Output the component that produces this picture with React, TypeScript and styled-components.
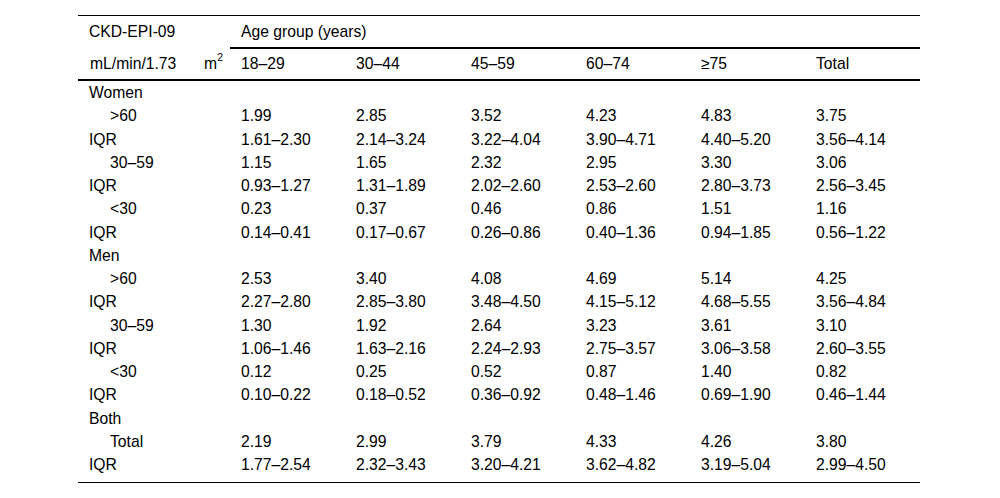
import React from "react";
import styled, { createGlobalStyle } from "styled-components";

const GlobalStyle = createGlobalStyle`
  html, body {
    margin: 0;
    padding: 0;
    background: #ffffff;
  }
  body {
    font-family: "Liberation Sans", Arial, sans-serif;
    color: #000000;
  }
`;

const Page = styled.div`
  padding: 15px 0 0 78px;
`;

const Table = styled.table`
  width: 842px;
  border-collapse: collapse;
  table-layout: fixed;
  font-size: 15.7px;
  border-top: 1px solid #000;
  border-bottom: 1px solid #000;
`;

const Col = styled.col<{ $w: number }>`
  width: ${(p) => p.$w}px;
`;

const HeadCell = styled.th<{ $rule?: boolean; $h: number }>`
  text-align: left;
  font-weight: normal;
  padding: 0 0 0 11px;
  height: ${(p) => p.$h}px;
  vertical-align: middle;
  border-bottom: ${(p) => (p.$rule ? "2px solid #000" : "none")};
`;

const UnitCell = styled(HeadCell)`
  padding: 0 7px 0 12px;
`;

const UnitInner = styled.div`
  display: flex;
  justify-content: space-between;
  align-items: baseline;
`;

const Sup = styled.sup`
  font-size: 10.5px;
  line-height: 0;
  position: relative;
  top: -1px;
`;

const Row = styled.tr<{ $last?: boolean }>`
  & > td {
    height: 23.25px;
    line-height: 23.25px;
    padding: ${(p) => (p.$last ? "0 0 6px 11px" : "0 0 0 11px")};
    vertical-align: top;
    white-space: nowrap;
  }
`;

const LabelCell = styled.td<{ $indent?: boolean }>`
  && {
    padding-left: ${(p) => (p.$indent ? "32px" : "11px")};
  }
`;

const Cell = styled.td``;

type Line =
  | { kind: "group"; label: string }
  | { kind: "data"; label: string; indent: boolean; values: string[] };

const lines: Line[] = [
  { kind: "group", label: "Women" },
  { kind: "data", label: ">60", indent: true, values: ["1.99", "2.85", "3.52", "4.23", "4.83", "3.75"] },
  { kind: "data", label: "IQR", indent: false, values: ["1.61–2.30", "2.14–3.24", "3.22–4.04", "3.90–4.71", "4.40–5.20", "3.56–4.14"] },
  { kind: "data", label: "30–59", indent: true, values: ["1.15", "1.65", "2.32", "2.95", "3.30", "3.06"] },
  { kind: "data", label: "IQR", indent: false, values: ["0.93–1.27", "1.31–1.89", "2.02–2.60", "2.53–2.60", "2.80–3.73", "2.56–3.45"] },
  { kind: "data", label: "<30", indent: true, values: ["0.23", "0.37", "0.46", "0.86", "1.51", "1.16"] },
  { kind: "data", label: "IQR", indent: false, values: ["0.14–0.41", "0.17–0.67", "0.26–0.86", "0.40–1.36", "0.94–1.85", "0.56–1.22"] },
  { kind: "group", label: "Men" },
  { kind: "data", label: ">60", indent: true, values: ["2.53", "3.40", "4.08", "4.69", "5.14", "4.25"] },
  { kind: "data", label: "IQR", indent: false, values: ["2.27–2.80", "2.85–3.80", "3.48–4.50", "4.15–5.12", "4.68–5.55", "3.56–4.84"] },
  { kind: "data", label: "30–59", indent: true, values: ["1.30", "1.92", "2.64", "3.23", "3.61", "3.10"] },
  { kind: "data", label: "IQR", indent: false, values: ["1.06–1.46", "1.63–2.16", "2.24–2.93", "2.75–3.57", "3.06–3.58", "2.60–3.55"] },
  { kind: "data", label: "<30", indent: true, values: ["0.12", "0.25", "0.52", "0.87", "1.40", "0.82"] },
  { kind: "data", label: "IQR", indent: false, values: ["0.10–0.22", "0.18–0.52", "0.36–0.92", "0.48–1.46", "0.69–1.90", "0.46–1.44"] },
  { kind: "group", label: "Both" },
  { kind: "data", label: "Total", indent: true, values: ["2.19", "2.99", "3.79", "4.33", "4.26", "3.80"] },
  { kind: "data", label: "IQR", indent: false, values: ["1.77–2.54", "2.32–3.43", "3.20–4.21", "3.62–4.82", "3.19–5.04", "2.99–4.50"] },
];

const ages = ["18–29", "30–44", "45–59", "60–74", "≥75", "Total"];

export default function App() {
  return (
    <>
      <GlobalStyle />
      <Page>
        <Table>
          <colgroup>
            <Col $w={152} />
            {ages.map((a) => (
              <Col key={a} $w={115} />
            ))}
          </colgroup>
          <thead>
            <tr>
              <HeadCell $h={31}>CKD-EPI-09</HeadCell>
              <HeadCell $h={31} $rule colSpan={6}>
                Age group (years)
              </HeadCell>
            </tr>
            <tr>
              <UnitCell $h={30} $rule>
                <UnitInner>
                  <span>mL/min/1.73</span>
                  <span>
                    m<Sup>2</Sup>
                  </span>
                </UnitInner>
              </UnitCell>
              {ages.map((a) => (
                <HeadCell key={a} $h={30} $rule>
                  {a}
                </HeadCell>
              ))}
            </tr>
          </thead>
          <tbody>
            {lines.map((l, i) => {
              const last = i === lines.length - 1;
              if (l.kind === "group") {
                return (
                  <Row key={i} $last={last}>
                    <LabelCell>{l.label}</LabelCell>
                    {ages.map((a) => (
                      <Cell key={a} />
                    ))}
                  </Row>
                );
              }
              return (
                <Row key={i} $last={last}>
                  <LabelCell $indent={l.indent}>{l.label}</LabelCell>
                  {l.values.map((v, j) => (
                    <Cell key={j}>{v}</Cell>
                  ))}
                </Row>
              );
            })}
          </tbody>
        </Table>
      </Page>
    </>
  );
}
